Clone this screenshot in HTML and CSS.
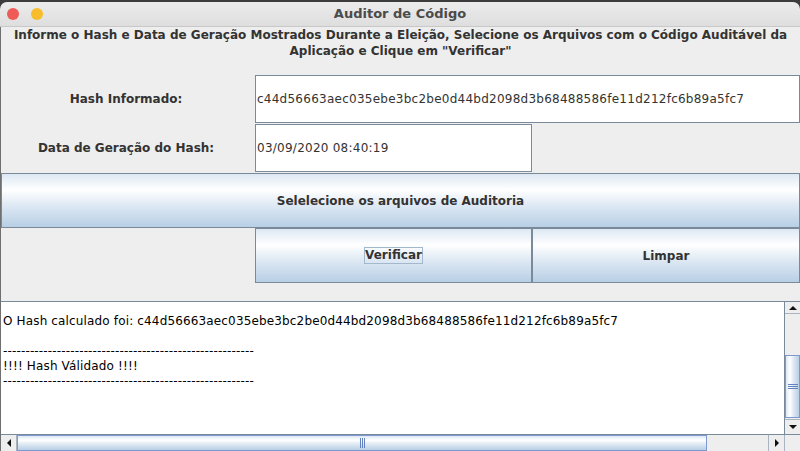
FILE: index.html
```html
<!DOCTYPE html>
<html lang="pt">
<head>
<meta charset="utf-8">
<title>Auditor de Código</title>
<link rel="stylesheet" href="styles.css">
</head>
<body>
<div class="window">
  <div class="titlebar">
    <div class="lights"><span class="light red"></span><span class="light yellow"></span></div>
    <div class="title">Auditor de Código</div>
  </div>
  <div class="content">
    <div class="header">Informe o Hash e Data de Geração Mostrados Durante a Eleição, Selecione os Arquivos com o Código Auditável da<br>Aplicação e Clique em "Verificar"</div>
    <div class="form">
      <div class="label">Hash Informado:</div>
      <div class="field hash">c44d56663aec035ebe3bc2be0d44bd2098d3b68488586fe11d212fc6b89a5fc7</div>
      <div class="label">Data de Geração do Hash:</div>
      <div class="field date">03/09/2020 08:40:19</div>
      <div class="btn wide">Selelecione os arquivos de Auditoria</div>
      <div class="btn verify"><span class="focus">Verificar</span></div>
      <div class="btn clear">Limpar</div>
    </div>
    <div class="output">
      <div class="viewport">
        <div class="text">
          <div class="line">O Hash calculado foi: c44d56663aec035ebe3bc2be0d44bd2098d3b68488586fe11d212fc6b89a5fc7</div>
          <div class="line">&nbsp;</div>
          <div class="line">--------------------------------------------------------</div>
          <div class="line">!!!! Hash Válidado !!!!</div>
          <div class="line">--------------------------------------------------------</div>
        </div>
        <div class="vscroll">
          <div class="sbtn up"><span class="tri tri-up"></span></div>
          <div class="vtrack">
            <div class="vgap"></div>
            <div class="vthumb"><span class="grip-h"></span></div>
          </div>
          <div class="sbtn down"><span class="tri tri-down"></span></div>
        </div>
      </div>
      <div class="hbar">
        <div class="hscroll">
          <div class="sbtn left"><span class="tri tri-left"></span></div>
          <div class="htrack">
            <div class="hthumb"><span class="grip-v"></span></div>
          </div>
          <div class="sbtn right"><span class="tri tri-right"></span></div>
        </div>
        <div class="corner"></div>
      </div>
    </div>
  </div>
</div>
</body>
</html>
```

FILE: styles.css
```css
* { box-sizing: border-box; }
html, body { margin: 0; padding: 0; }
body {
  width: 800px;
  height: 451px;
  overflow: hidden;
  background: #3c3c3c;
  font-family: "DejaVu Sans", sans-serif;
}
.window {
  margin-top: 2px;
  width: 800px;
  height: 449px;
  display: flex;
  flex-direction: column;
}
.titlebar {
  height: 25px;
  flex: none;
  display: flex;
  align-items: center;
  position: relative;
  background: linear-gradient(#ececec, #dedede);
  border-bottom: 1px solid #c8c8c8;
  border-radius: 7px 7px 0 0;
}
.lights {
  display: flex;
  gap: 12px;
  padding-left: 7px;
}
.light {
  width: 12px;
  height: 12px;
  border-radius: 50%;
}
.red { background: #ef5b56; }
.yellow { background: #f7bd2d; }
.title {
  position: absolute;
  left: 0;
  right: 0;
  top: 4px;
  text-align: center;
  font-weight: bold;
  font-size: 13px;
  color: #4b4b4b;
}
.content {
  flex: 1;
  background: #eeeeee;
  border-left: 1px solid #6f6f6f;
  display: flex;
  flex-direction: column;
}
.header {
  height: 48px;
  flex: none;
  text-align: center;
  font-weight: bold;
  font-size: 12px;
  line-height: 16px;
  color: #333333;
  padding-top: 0px;
}
.form {
  display: grid;
  grid-template-columns: 254px 277px 268px;
  grid-template-rows: 49px 49px 55px 55px;
}
.label {
  height: 48px;
  display: flex;
  align-items: center;
  justify-content: center;
  padding-right: 4px;
  font-weight: bold;
  font-size: 12px;
  color: #333333;
}
.field {
  height: 48px;
  background: #ffffff;
  border: 1px solid #7a8a99;
  display: flex;
  align-items: center;
  padding-left: 1px;
  font-size: 12px;
  letter-spacing: 0.25px;
  color: #333333;
  white-space: nowrap;
}
.field.hash { grid-column: 2 / 4; }
.field.date { grid-column: 2 / 3; }
.btn {
  height: 55px;
  border: 1px solid #7a8a99;
  background: linear-gradient(#dde8f3 0%, #ffffff 30%, #dde8f3 60%, #b8cfe5 100%);
  display: flex;
  align-items: center;
  justify-content: center;
  font-weight: bold;
  font-size: 12px;
  color: #333333;
}
.btn.wide { grid-column: 1 / 4; }
.btn.verify { grid-column: 2 / 3; }
.btn.clear { grid-column: 3 / 4; }
.focus {
  border: 1px solid #a3b8cc;
  padding: 1px 0 1px 0;
  line-height: 13px;
}
.output {
  margin-top: 18px;
  flex: 1;
  display: flex;
  flex-direction: column;
  border-top: 1px solid #7a8a99;
  background: #ffffff;
}
.viewport {
  flex: 1;
  display: flex;
  min-height: 0;
}
.text {
  flex: 1;
  padding: 12px 0 0 2px;
  font-size: 12px;
  line-height: 15px;
  color: #000000;
  white-space: nowrap;
  overflow: hidden;
  letter-spacing: 0.15px;
}
.vscroll {
  width: 16px;
  flex: none;
  display: flex;
  flex-direction: column;
  background: #eeeeee;
  border-left: 1px solid #7a8a99;
}
.sbtn {
  flex: none;
  background: #eeeeee;
  display: flex;
  align-items: center;
  justify-content: center;
}
.sbtn.up { height: 12px; border-bottom: 1px solid #aab4c0; }
.sbtn.down { height: 15px; border-top: 1px solid #aab4c0; }
.sbtn.left { width: 16px; border-right: 1px solid #aab4c0; }
.sbtn.right { width: 16px; border-left: 1px solid #aab4c0; }
.vtrack {
  flex: 1;
  display: flex;
  flex-direction: column;
}
.vgap { height: 41px; flex: none; }
.vthumb {
  height: 63px;
  border: 1px solid #7c9ad1;
  background: linear-gradient(90deg, #dde8f3 0%, #ffffff 30%, #dde8f3 60%, #b8cfe5 100%);
  display: flex;
  align-items: center;
  justify-content: center;
}
.grip-h {
  width: 10px;
  height: 5px;
  border-top: 1px solid #6382bf;
  border-bottom: 1px solid #6382bf;
  position: relative;
}
.grip-h::after {
  content: "";
  position: absolute;
  left: 0;
  right: 0;
  top: 1px;
  border-top: 1px solid #6382bf;
}
.hbar {
  height: 17px;
  flex: none;
  display: flex;
  border-top: 1px solid #7a8a99;
}
.hscroll {
  flex: 1;
  display: flex;
  background: #eeeeee;
}
.htrack {
  flex: 1;
  display: flex;
}
.hthumb {
  width: 690px;
  border: 1px solid #7c9ad1;
  background: linear-gradient(#dde8f3 0%, #ffffff 30%, #dde8f3 60%, #b8cfe5 100%);
  display: flex;
  align-items: center;
  justify-content: center;
}
.grip-v {
  width: 5px;
  height: 10px;
  border-left: 1px solid #6382bf;
  border-right: 1px solid #6382bf;
  position: relative;
}
.grip-v::after {
  content: "";
  position: absolute;
  top: 0;
  bottom: 0;
  left: 1px;
  border-left: 1px solid #6382bf;
}
.corner {
  width: 16px;
  flex: none;
  background: #eeeeee;
  border-left: 1px solid #aab4c0;
}
.tri { width: 0; height: 0; }
.tri-up { border-left: 4px solid transparent; border-right: 4px solid transparent; border-bottom: 4px solid #111; }
.tri-down { border-left: 4px solid transparent; border-right: 4px solid transparent; border-top: 4px solid #111; }
.tri-left { border-top: 4px solid transparent; border-bottom: 4px solid transparent; border-right: 4px solid #111; }
.tri-right { border-top: 4px solid transparent; border-bottom: 4px solid transparent; border-left: 4px solid #111; }
```
